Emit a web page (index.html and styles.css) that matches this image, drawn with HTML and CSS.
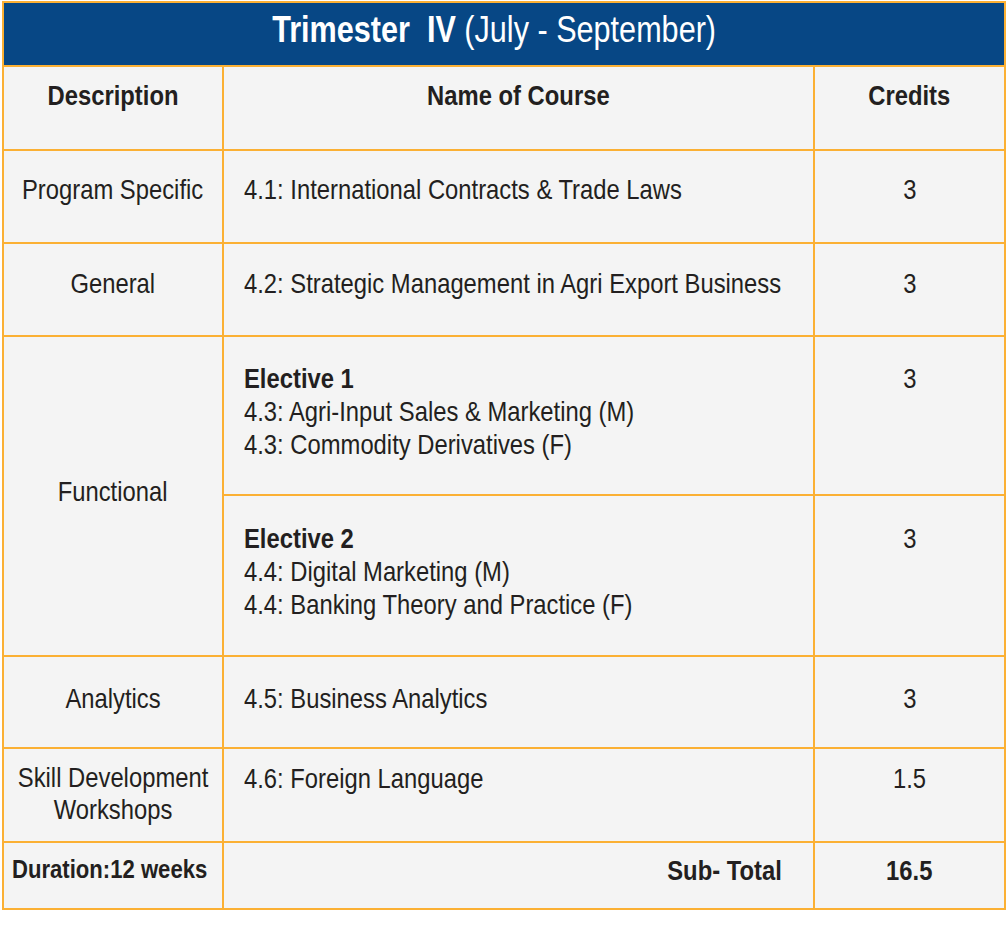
FILE: index.html
```html
<!DOCTYPE html>
<html lang="en">
<head>
<meta charset="utf-8">
<title>Trimester IV</title>
<link rel="stylesheet" href="styles.css">
</head>
<body>
<div class="sheet">
  <div class="title"><span class="t"><b>Trimester&nbsp; IV</b> (July - September)</span></div>

  <div class="cell head c1"><span class="t">Description</span></div>
  <div class="cell head c2c"><span class="t">Name of Course</span></div>
  <div class="cell head c3"><span class="t">Credits</span></div>

  <div class="cell c1 r-prog"><span class="t">Program Specific</span></div>
  <div class="cell c2 r-prog"><span class="t">4.1: International Contracts &amp; Trade Laws</span></div>
  <div class="cell c3 r-prog"><span class="t">3</span></div>

  <div class="cell c1 r-gen"><span class="t">General</span></div>
  <div class="cell c2 r-gen"><span class="t">4.2: Strategic Management in Agri Export Business</span></div>
  <div class="cell c3 r-gen"><span class="t">3</span></div>

  <div class="cell c1 functional"><span class="t">Functional</span></div>
  <div class="cell c2 r-el1"><span class="t"><b>Elective 1</b><br>4.3: Agri-Input Sales &amp; Marketing (M)<br>4.3: Commodity Derivatives (F)</span></div>
  <div class="cell c3 r-el1"><span class="t">3</span></div>
  <div class="cell c2 r-el2"><span class="t"><b>Elective 2</b><br>4.4: Digital Marketing (M)<br>4.4: Banking Theory and Practice (F)</span></div>
  <div class="cell c3 r-el2"><span class="t">3</span></div>

  <div class="cell c1 r-ana"><span class="t">Analytics</span></div>
  <div class="cell c2 r-ana"><span class="t">4.5: Business Analytics</span></div>
  <div class="cell c3 r-ana"><span class="t">3</span></div>

  <div class="cell c1 r-skill skill"><span class="t">Skill Development<br>Workshops</span></div>
  <div class="cell c2 r-skill"><span class="t">4.6: Foreign Language</span></div>
  <div class="cell c3 r-skill"><span class="t">1.5</span></div>

  <div class="cell foot duration"><span class="t">Duration:12 weeks</span></div>
  <div class="cell c2 foot subtotal"><span class="t">Sub- Total</span></div>
  <div class="cell c3 foot total"><span class="t">16.5</span></div>
</div>
</body>
</html>
```

FILE: styles.css
```css
* { box-sizing: border-box; }

html, body {
  margin: 0;
  padding: 0;
  background: #ffffff;
}

body {
  font-family: "Liberation Sans", Arial, sans-serif;
  color: #231f20;
}

.sheet {
  margin: 1px 0 0 2px;
  width: 1004px;
  display: grid;
  grid-template-columns: 220px 591px 191px;
  grid-template-rows: 64px 84px 93px 93px 159px 161px 92px 94px 67px;
  border-left: 2px solid #fbb034;
  border-top: 2px solid #fbb034;
  background: #f4f4f4;
}

/* condensed lettering: the text is drawn narrower, like a condensed sans */
.t {
  display: inline-block;
  white-space: nowrap;
  transform: scaleX(0.85);
  transform-origin: center;
}

.title {
  grid-column: 1 / 4;
  background: #074785;
  color: #ffffff;
  border-right: 2px solid #fbb034;
  border-bottom: 2px solid #fbb034;
  text-align: center;
  font-size: 36px;
  line-height: 54px;
  padding-right: 20px;
  white-space: nowrap;
}

.title b { font-weight: 700; }

.cell {
  border-right: 2px solid #fbb034;
  border-bottom: 2px solid #fbb034;
  font-size: 28px;
  line-height: 33px;
  padding-top: 24px;
}

.cell b { font-weight: 700; }

.c1 {
  display: flex;
  flex-direction: column;
  align-items: center;
  text-align: center;
}
.c2 { text-align: left; padding-left: 20px; }
.c2 .t { transform-origin: left center; }
.c2c { text-align: center; }
.c3 { text-align: center; }

.head { font-weight: 700; padding-top: 12px; }

.r-prog { padding-top: 22px; }
.r-gen { padding-top: 23px; }
.r-el1 { padding-top: 25px; }
.r-el2 { padding-top: 26px; }
.r-ana { padding-top: 25px; }
.r-skill { padding-top: 13px; }
.skill { line-height: 32px; }

.functional {
  grid-row: 5 / 7;
  justify-content: center;
  padding-top: 0;
  padding-bottom: 10px;
}

.foot { font-weight: 700; padding-top: 12px; }
.duration {
  font-size: 26px;
  text-align: left;
  padding-left: 8px;
  padding-top: 10px;
}
.duration .t { transform-origin: left center; }
.subtotal { text-align: right; padding-right: 31px; padding-top: 11px; }
.subtotal .t { transform-origin: right center; }
.total { text-align: center; padding-top: 11px; }
```
